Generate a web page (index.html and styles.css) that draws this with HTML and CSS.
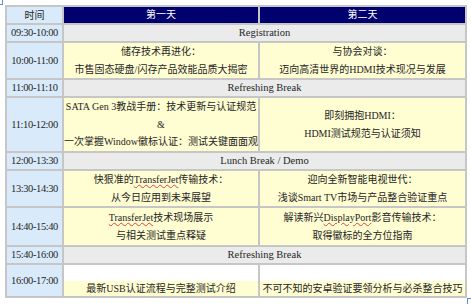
FILE: index.html
```html
<!DOCTYPE html>
<html lang="zh-CN">
<head>
<meta charset="utf-8">
<title>Agenda</title>
<link rel="stylesheet" href="styles.css">
</head>
<body>
<div class="page">
  <span class="mark mark-tl"></span>
  <div class="agenda">
    <div class="cell time head">时间</div>
    <div class="cell day-head">第一天</div>
    <div class="cell day-head">第二天</div>

    <div class="cell time">09:30-10:00</div>
    <div class="cell brk span">Registration</div>

    <div class="cell time">10:00-11:00</div>
    <div class="cell sess"><div>储存技术再进化：</div><div>市售固态硬盘/闪存产品效能品质大揭密</div></div>
    <div class="cell sess"><div>与协会对谈：</div><div>迈向高清世界的HDMI技术现况与发展</div></div>

    <div class="cell time">11:00-11:10</div>
    <div class="cell brk span">Refreshing Break</div>

    <div class="cell time">11:10-12:00</div>
    <div class="cell sess three"><div>SATA Gen 3教战手册：技术更新与认证规范</div><div>&amp;</div><div>一次掌握Window徽标认证：测试关键面面观</div></div>
    <div class="cell sess"><div>即刻拥抱HDMI：</div><div>HDMI测试规范与认证须知</div></div>

    <div class="cell time">12:00-13:30</div>
    <div class="cell brk span">Lunch Break / Demo</div>

    <div class="cell time">13:30-14:30</div>
    <div class="cell sess"><div>快狠准的<span class="spell">TransferJet</span>传输技术：</div><div>从今日应用到未来展望</div></div>
    <div class="cell sess"><div>迎向全新智能电视世代：</div><div>浅谈Smart TV市场与产品整合验证重点</div></div>

    <div class="cell time">14:40-15:40</div>
    <div class="cell sess"><div><span class="spell">TransferJet</span>技术现场展示</div><div>与相关测试重点释疑</div></div>
    <div class="cell sess"><div>解读新兴<span class="spell">DisplayPort</span>影音传输技术：</div><div>取得徽标的全方位指南</div></div>

    <div class="cell time">15:40-16:00</div>
    <div class="cell brk span">Refreshing Break</div>

    <div class="cell time">16:00-17:00</div>
    <div class="cell blankcell"><div class="band">最新USB认证流程与完整测试介绍</div></div>
    <div class="cell blankcell"><div class="band">不可不知的安卓验证要领分析与必杀整合技巧</div></div>
  </div>
  <span class="mark mark-br"></span>
</div>
</body>
</html>
```

FILE: styles.css
```css
html, body {
  margin: 0;
  padding: 0;
  background: #ffffff;
}

.page {
  position: relative;
  width: 471px;
  height: 304px;
  padding: 5px 0 0 5px;
  box-sizing: border-box;
  font-family: "Liberation Serif", "Noto Sans CJK SC", serif;
  font-size: 10.5px;
  color: #262626;
}

.agenda {
  display: grid;
  grid-template-columns: 55px 194px 205px;
  grid-template-rows: 16px 16px 35px 16px 53px 16px 35px 37px 16px 31px;
  gap: 2px;
  padding: 2px;
  width: 462px;
  box-sizing: border-box;
  background: #c6c6c6;
}

.cell {
  display: flex;
  flex-direction: column;
  justify-content: center;
  align-items: center;
  text-align: center;
  white-space: nowrap;
  line-height: 18px;
  overflow: visible;
}

.time {
  background: #d9ebfa;
  letter-spacing: -0.4px;
  line-height: 16px;
}

.time.head {
  letter-spacing: 0;
  font-family: "Noto Sans CJK SC", sans-serif;
  font-size: 10px;
}

.day-head {
  background: #00006e;
  color: #ffffff;
  font-size: 10px;
  line-height: 16px;
}

.brk {
  background: #ebebeb;
  line-height: 16px;
}

.span {
  grid-column: 2 / 4;
}

.sess {
  background: #fffdd2;
  font-size: 10px;
}

.sess.three {
  line-height: 17.5px;
}

.blankcell {
  background: #ffffff;
  justify-content: flex-end;
  font-size: 10px;
}

.band {
  width: 100%;
  height: 15px;
  line-height: 15px;
  background: #fffdd2;
}

.spell {
  text-decoration: underline wavy #e04040;
  text-decoration-thickness: 1px;
  text-underline-offset: 1px;
}

.mark {
  position: absolute;
  display: block;
  border-color: #5b8fd0;
  border-style: solid;
}

.mark-tl {
  left: 0;
  top: 0;
  width: 2px;
  height: 4px;
  border-width: 0 1px 1px 0;
}

.mark-br {
  left: 467px;
  top: 298px;
  width: 4px;
  height: 6px;
  border-width: 1px 0 0 1px;
}
```
